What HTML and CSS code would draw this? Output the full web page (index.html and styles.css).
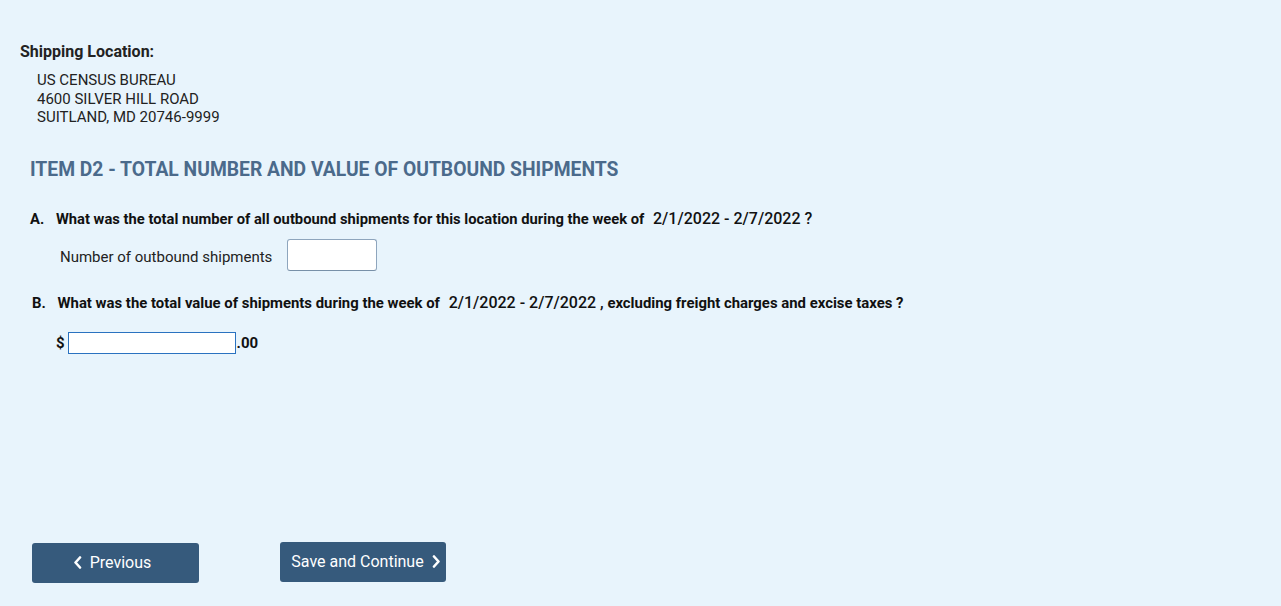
FILE: index.html
```html
<!DOCTYPE html>
<html lang="en">
<head>
  <meta charset="UTF-8" />
  <title>Item D2</title>
  <link rel="stylesheet" href="styles.css">
</head>
<body>
  <div class="page">
    <div class="location">
      <div class="location-title">Shipping Location:</div>
      <div class="address">
        US CENSUS BUREAU<br>
        4600 SILVER HILL ROAD<br>
        SUITLAND, MD 20746-9999
      </div>
    </div>

    <h2 class="item-title">ITEM D2 - TOTAL NUMBER AND VALUE OF OUTBOUND SHIPMENTS</h2>

    <div class="question q-a">
      <span class="q-num">A.</span>
      <span>What was the total number of all outbound shipments for this location during the week of</span>
      <span class="dates">2/1/2022 - 2/7/2022 ?</span>
    </div>
    <div class="answer-row">
      <label for="count">Number of outbound shipments</label>
      <input type="text" id="count" class="count-input" />
    </div>

    <div class="question q-b">
      <span class="q-num">B.</span>
      <span>What was the total value of shipments during the week of</span>
      <span class="dates">2/1/2022 - 2/7/2022 ,</span>
      <span>excluding freight charges and excise taxes ?</span>
    </div>
    <div class="money-row">
      <span class="dollar">$</span><input type="text" class="money-input" /><span class="cents">.00</span>
    </div>

    <div class="nav">
      <button class="btn btn-prev">
        <svg class="chev" width="9" height="13" viewBox="0 0 9 13"><path d="M7 1.5 L2.5 6.5 L7 11.5" fill="none" stroke="#fff" stroke-width="2.6" stroke-linecap="round" stroke-linejoin="round"/></svg>
        Previous
      </button>
      <button class="btn btn-next">
        Save and Continue
        <svg class="chev" width="9" height="13" viewBox="0 0 9 13"><path d="M2 1.5 L6.5 6.5 L2 11.5" fill="none" stroke="#fff" stroke-width="2.6" stroke-linecap="round" stroke-linejoin="round"/></svg>
      </button>
    </div>
  </div>
</body>
</html>
```

FILE: styles.css
```css
*, *::before, *::after { box-sizing: border-box; margin: 0; padding: 0; }
html, body { height: 100%; }
body { font-family: Roboto, 'Liberation Sans', sans-serif; background: #e8f4fc; color: #1f1f1f; font-size: 15px; }
.page { padding: 43px 0 0 20px; }

/* 배송지 */
.location-title { font-weight: 700; font-size: 16px; line-height: 18px; color: #222; }
.address { margin: 10px 0 0 17px; font-size: 15px; line-height: 18.5px; color: #222; }

.item-title { margin: 32px 0 0 10px; font-size: 19.3px; font-weight: 700; color: #4b6a8b; line-height: 22px; }

.question { font-weight: 700; font-size: 14.75px; color: #111; line-height: 20px; }
.question .dates { font-size: 16px; font-weight: 500; margin-left: 5px; }
.q-a { margin: 28px 0 0 10px; }
.q-a .q-num { margin-right: 8px; }
.q-b { margin: 22px 0 0 12px; font-size: 14.9px; }
.q-b .q-num { margin-right: 8px; }

.answer-row { display: flex; align-items: center; margin: 10px 0 0 40px; }
.answer-row label { font-size: 15px; color: #222; margin: 5px 15px 0 0; }
.count-input { width: 90px; height: 32px; border: 1px solid #8ea5bd; border-bottom-color: #7890a8; border-radius: 3px; background: #fff; }

.money-row { display: flex; align-items: center; margin: 19px 0 0 36px; font-weight: 700; font-size: 15px; color: #111; }
.money-input { width: 168px; height: 22px; border: 1px solid #2a72c0; background: #fff; margin-left: 3px; }
.cents { margin-left: 1px; }

/* 하단 버튼 */
.nav { display: flex; align-items: flex-start; gap: 81px; margin: 188px 0 0 12px; }
.btn { display: flex; align-items: center; justify-content: center; height: 40px; border: none; border-radius: 3px; background: #365a7c; color: #fff; font-family: Roboto, 'Liberation Sans', sans-serif; font-size: 16px; cursor: pointer; }
.btn-prev { width: 167px; margin-top: 1px; gap: 8px; padding-right: 7px; }
.btn-next { width: 166px; gap: 8px; padding-left: 6px; }
```
